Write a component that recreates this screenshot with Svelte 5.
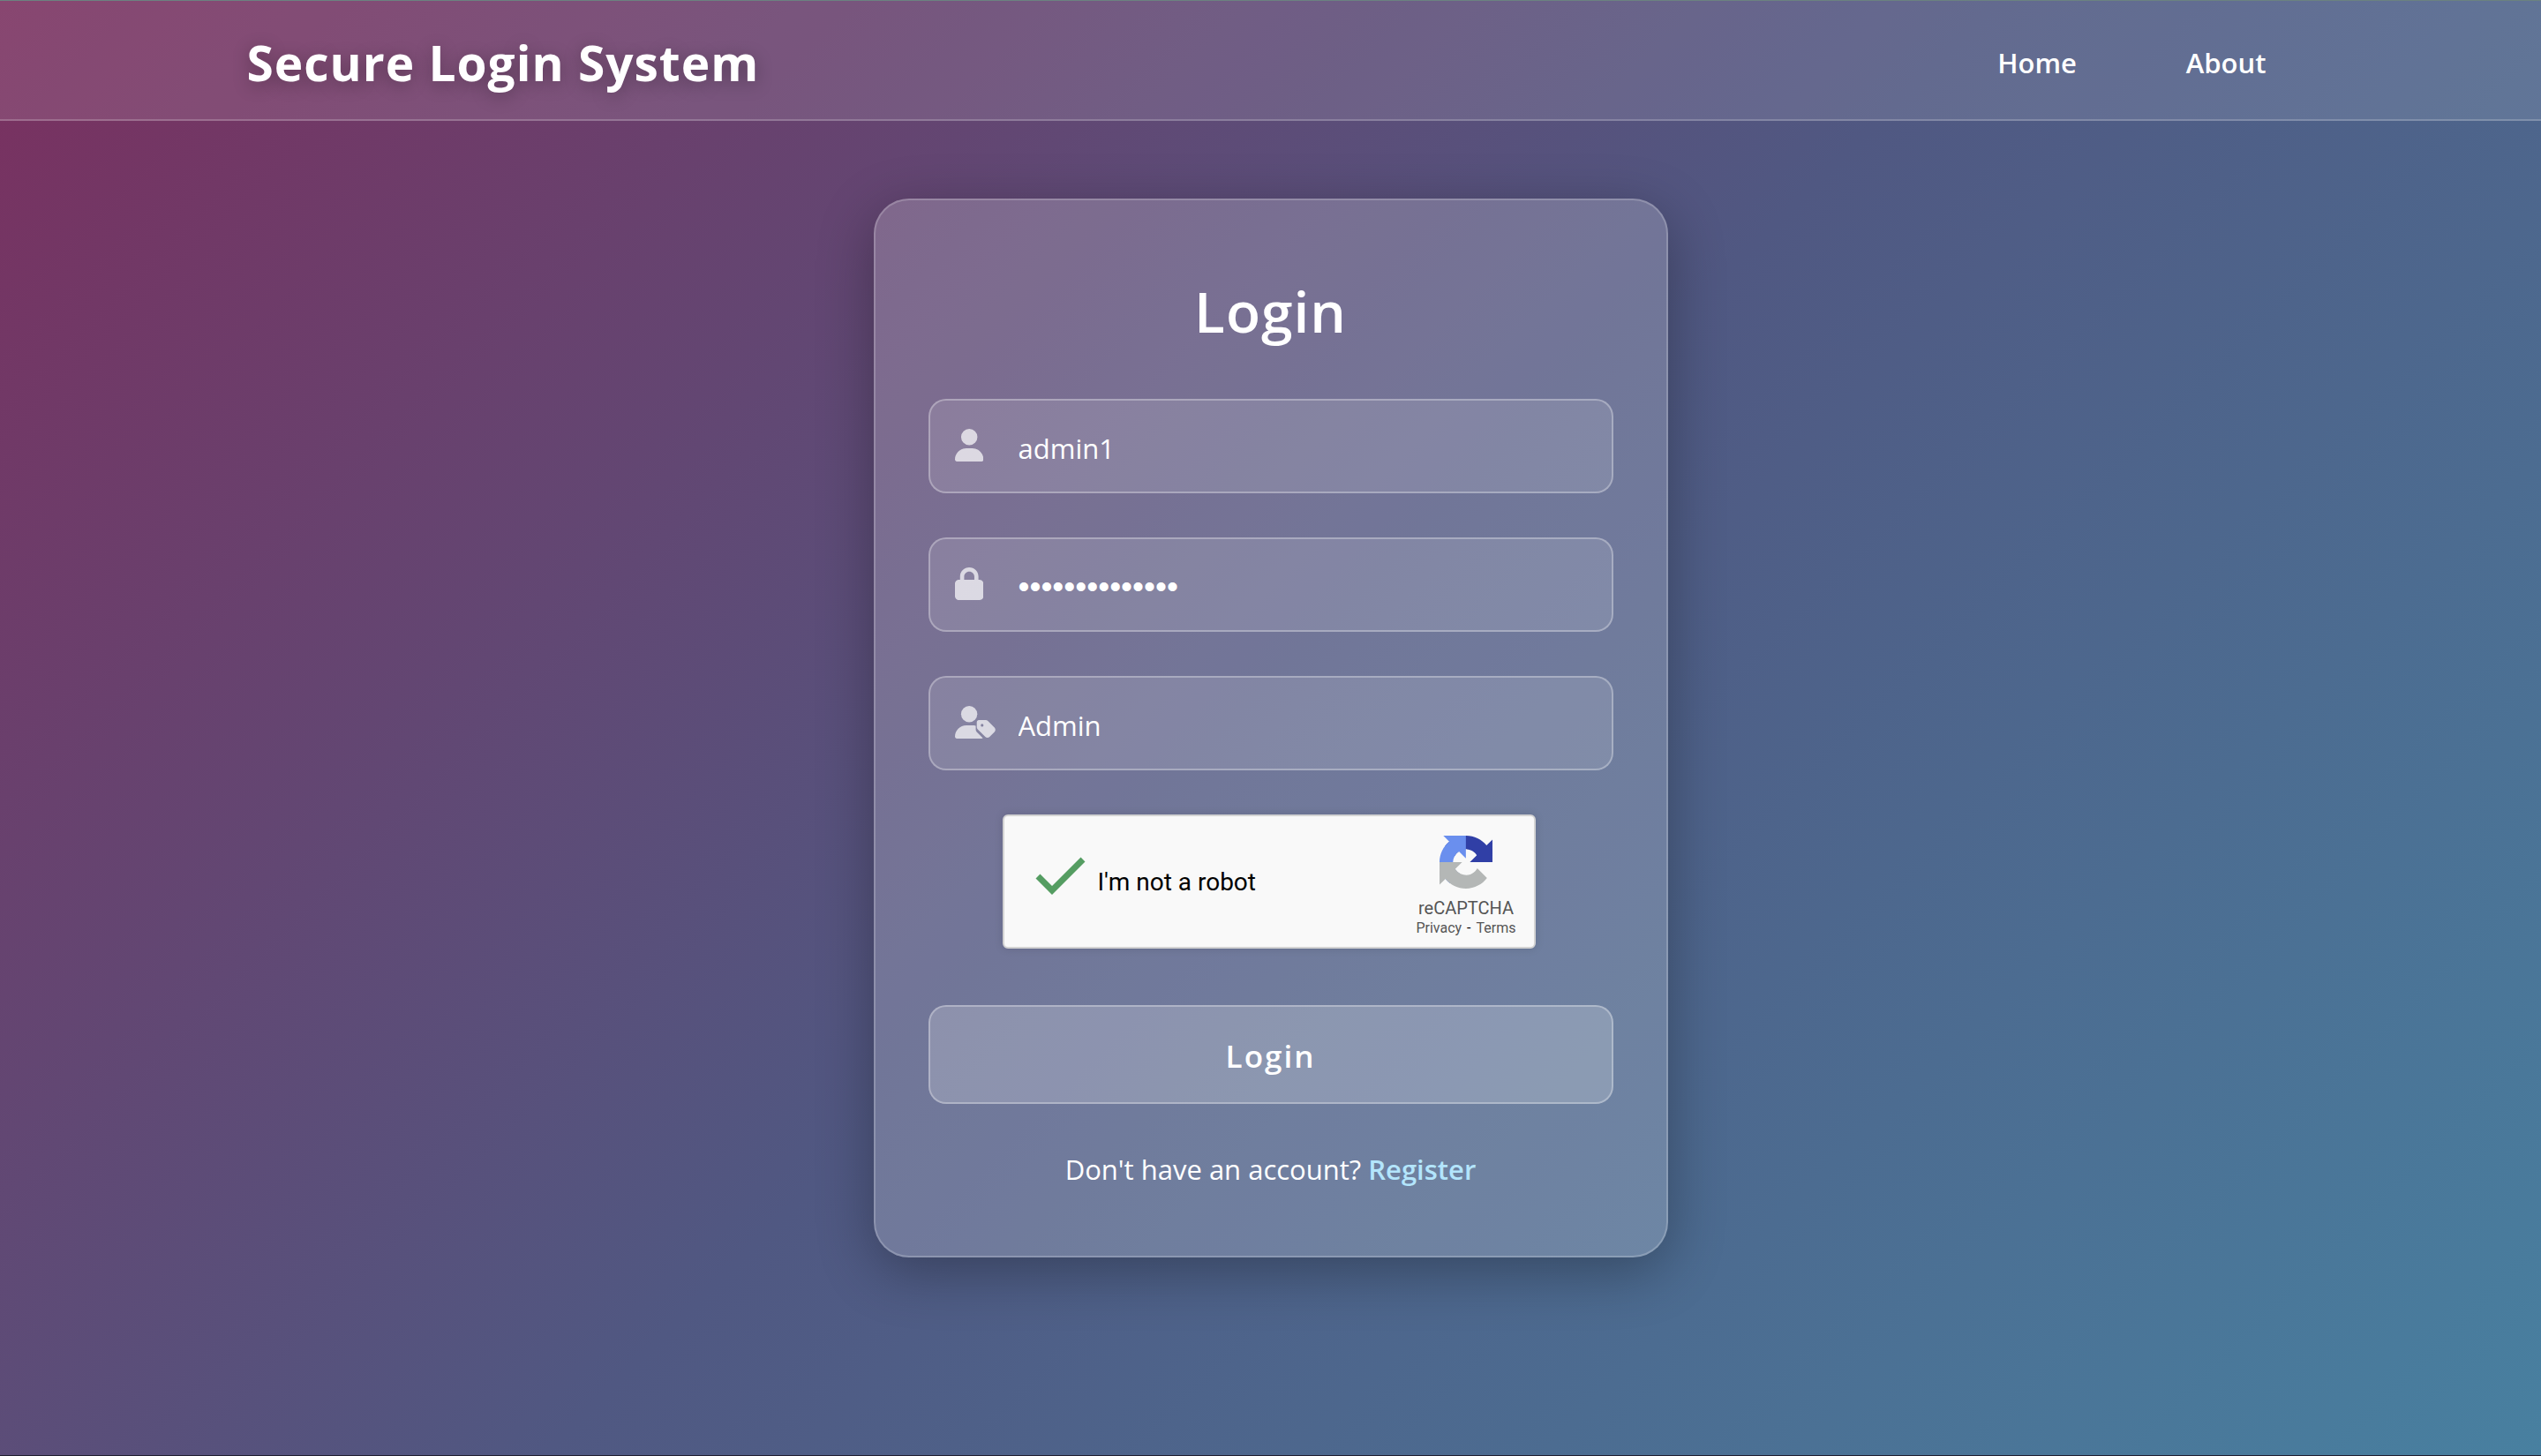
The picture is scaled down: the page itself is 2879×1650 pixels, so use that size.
<script>
  let username = $state('admin1');
  let password = $state('password123456');
  let role = $state('Admin');
  let verified = $state(true);

  const roles = ['Admin', 'User'];
</script>

<div class="page">
  <header class="topbar">
    <div class="bar-inner">
      <h1 class="brand">Secure Login System</h1>
      <nav class="nav" aria-label="Main">
        <a href="#home">Home</a>
        <a href="#about">About</a>
      </nav>
    </div>
  </header>

  <main class="main">
    <form class="card" onsubmit={(e) => e.preventDefault()}>
      <h2 class="title">Login</h2>

      <div class="field">
        <span class="icon">
          <svg viewBox="0 0 448 512" aria-hidden="true">
            <path d="M224 256A128 128 0 1 0 224 0a128 128 0 1 0 0 256zm-45.7 48C79.8 304 0 383.8 0 482.3C0 498.7 13.3 512 29.7 512l388.6 0c16.4 0 29.7-13.3 29.7-29.7C448 383.8 368.2 304 269.7 304l-91.4 0z" />
          </svg>
        </span>
        <input type="text" aria-label="Username" autocomplete="off" spellcheck="false" bind:value={username} />
      </div>

      <div class="field">
        <span class="icon">
          <svg viewBox="0 0 448 512" aria-hidden="true">
            <path d="M144 144l0 48 160 0 0-48c0-44.2-35.8-80-80-80s-80 35.8-80 80zM80 192l0-48C80 64.5 144.5 0 224 0s144 64.5 144 144l0 48 16 0c35.3 0 64 28.7 64 64l0 192c0 35.3-28.7 64-64 64L64 512c-35.3 0-64-28.7-64-64L0 256c0-35.3 28.7-64 64-64l16 0z" />
          </svg>
        </span>
        <input class="secret" type="password" aria-label="Password" autocomplete="off" bind:value={password} />
      </div>

      <div class="field">
        <span class="icon">
          <svg viewBox="0 0 640 512" aria-hidden="true">
            <path d="M224 256A128 128 0 1 0 224 0a128 128 0 1 0 0 256z" />
            <path d="M178.300 304C79.800 304 0 383.800 0 482.300C0 498.700 13.300 512 29.700 512H418c8 0 16-2 22-6L343 409c-10-10-15-23-15-37v-61c-18-5-38-7-58-7z" />
            <path fill-rule="evenodd" d="M376 222h109c13 0 25 5 34 14l104 104c19 19 19 49 0 68l-77 77c-19 19-49 19-68 0L358 366c-9-9-14-20-14-33v-79c0-18 14-32 32-32zM428 282a22 22 0 1 0 0 44a22 22 0 1 0 0-44z" />
          </svg>
        </span>
        <select aria-label="Role" bind:value={role}>
          {#each roles as r}
            <option value={r}>{r}</option>
          {/each}
        </select>
      </div>

      <div class="captcha-frame">
        <div class="captcha">
          <label class="check">
            <span class="tick">
              <input type="checkbox" bind:checked={verified} />
              {#if verified}
                <svg viewBox="0 0 60 44" aria-hidden="true">
                  <path d="M4 23L20 39L55 4" />
                </svg>
              {/if}
            </span>
            <span>I'm not a robot</span>
          </label>
          <div class="badge">
            <svg viewBox="0 0 64 64" aria-hidden="true">
              <path fill="#303fa6" d="M64 31.955l-.033-1.370V4.687l-7.160 7.160C50.948 4.674 42.033.093 32.050.093c-10.400 0-19.622 4.960-25.458 12.640l11.736 11.860a15.550 15.550 0 0 1 4.754-5.334c2.050-1.600 4.952-2.906 8.968-2.906.485 0 .860.057 1.135.163 4.976.393 9.288 3.140 11.828 7.124l-8.307 8.307L64 31.953" />
              <path fill="#6a8fee" d="M31.862.094l-1.370.033H4.594l7.160 7.160C4.580 13.147 0 22.060 0 32.046c0 10.400 4.960 19.622 12.640 25.458L24.500 45.768a15.550 15.550 0 0 1-5.334-4.754c-1.600-2.050-2.906-4.952-2.906-8.968 0-.485.057-.860.163-1.135.393-4.976 3.140-9.288 7.124-11.828l8.307 8.307L31.860.095" />
              <path fill="#b4b7b6" d="M.001 32.045l.033 1.370v25.898l7.160-7.160c5.860 7.173 14.774 11.754 24.760 11.754 10.400 0 19.622-4.960 25.458-12.640l-11.736-11.860a15.550 15.550 0 0 1-4.754 5.334c-2.050 1.600-4.952 2.906-8.968 2.906-.485 0-.860-.057-1.135-.163-4.976-.393-9.288-3.140-11.828-7.124l8.307-8.307L0 32.047" />
            </svg>
            <span class="badge-name">reCAPTCHA</span>
            <span class="badge-links">
              <a href="#privacy">Privacy</a>
              <span class="dash">-</span>
              <a href="#terms">Terms</a>
            </span>
          </div>
        </div>
      </div>

      <button class="submit" type="submit">Login</button>

      <p class="signup">Don't have an account? <a href="#register">Register</a></p>
    </form>
  </main>
</div>

<style>
  .page {
    box-sizing: border-box;
    min-height: 100vh;
    display: flex;
    flex-direction: column;
    border-top: 1px solid #6b8280;
    border-bottom: 1px solid #211f30;
    background: linear-gradient(135deg, #7a305f 0%, #505882 50%, #4880a0 100%);
    color: #fff;
    font-family: 'Segoe UI', 'Open Sans', 'Noto Sans', sans-serif;
    font-size: 31px;
    line-height: 44px;
  }

  .topbar {
    background: rgba(255, 255, 255, 0.11);
    border-bottom: 2px solid rgba(255, 255, 255, 0.2);
  }

  .bar-inner {
    box-sizing: border-box;
    max-width: 2400px;
    margin: 0 auto;
    padding: 32px 40px 26px;
    display: flex;
    align-items: center;
    justify-content: space-between;
  }

  .brand {
    margin: 0;
    font-size: 55px;
    line-height: 76px;
    font-weight: 700;
    letter-spacing: 1px;
    text-shadow: 0 4px 20px rgba(0, 0, 0, 0.3);
  }

  .nav {
    display: flex;
    gap: 60px;
  }

  .nav a {
    padding: 0 32px;
    color: #fff;
    font-weight: 600;
    text-decoration: none;
  }

  .main {
    flex: 1;
    display: flex;
    justify-content: center;
    align-items: flex-start;
    padding: 88px 40px 80px;
  }

  .card {
    box-sizing: border-box;
    width: 100%;
    max-width: 900px;
    padding: 83px 60px 76px;
    border: 2px solid rgba(255, 255, 255, 0.2);
    border-radius: 40px;
    background: rgba(255, 255, 255, 0.19);
    box-shadow: 0 16px 64px rgba(0, 0, 0, 0.3);
    display: flex;
    flex-direction: column;
  }

  .title {
    margin: 0 0 57px;
    font-size: 64px;
    line-height: 85px;
    font-weight: 600;
    letter-spacing: 1px;
    text-align: center;
  }

  .field {
    box-sizing: border-box;
    height: 107px;
    margin-bottom: 50px;
    padding: 0 26px 0 28px;
    display: flex;
    align-items: center;
    gap: 26px;
    border: 2px solid rgba(255, 255, 255, 0.3);
    border-radius: 20px;
    background: rgba(255, 255, 255, 0.12);
  }

  .icon {
    width: 46px;
    flex: none;
    display: flex;
    margin-bottom: 2px;
  }

  .icon svg {
    height: 37px;
    fill: rgba(255, 255, 255, 0.7);
  }

  .field input,
  .field select {
    flex: 1;
    min-width: 0;
    align-self: stretch;
    margin: 0;
    padding: 4px 0 0;
    border: 0;
    outline: 0;
    background: transparent;
    color: #fff;
    font: inherit;
    appearance: none;
  }

  .field .secret {
    font-family: 'Liberation Sans', sans-serif;
    font-size: 37px;
  }

  .field option {
    color: #222;
  }

  .captcha-frame {
    width: 608px;
    max-width: 100%;
    align-self: center;
    margin-bottom: 64px;
  }

  .captcha {
    box-sizing: border-box;
    max-width: 604px;
    height: 152px;
    padding: 0 20px 0 34px;
    display: flex;
    align-items: center;
    justify-content: space-between;
    border: 2px solid #d3d3d3;
    border-radius: 6px;
    background: #f9f9f9;
    box-shadow: 0 0 8px 2px rgba(0, 0, 0, 0.08);
    color: #000;
    font-family: Roboto, sans-serif;
  }

  .check {
    display: flex;
    align-items: center;
    gap: 12px;
    padding-top: 2px;
    font-size: 28px;
    line-height: 34px;
  }

  .tick {
    width: 60px;
    height: 44px;
    display: grid;
    margin-bottom: 16px;
  }

  .tick input,
  .tick svg {
    grid-area: 1 / 1;
    width: 100%;
    height: 100%;
    margin: 0;
  }

  .tick input {
    appearance: none;
    outline: 0;
  }

  .tick svg {
    fill: none;
    stroke: #559d62;
    stroke-width: 7;
    pointer-events: none;
  }

  .badge {
    display: flex;
    flex-direction: column;
    align-items: center;
    padding-top: 12px;
    color: #555;
  }

  .badge svg {
    width: 60px;
    height: 60px;
  }

  .badge-name {
    margin-top: 10px;
    font-size: 20px;
    line-height: 24px;
  }

  .badge-links {
    display: flex;
    gap: 6px;
    font-size: 16px;
    line-height: 22px;
  }

  .badge-links a {
    color: #555;
    text-decoration: none;
  }

  .dash {
    color: #000;
  }

  .submit {
    height: 112px;
    padding: 4px 0 0;
    border: 2px solid rgba(255, 255, 255, 0.3);
    border-radius: 20px;
    background: rgba(255, 255, 255, 0.2);
    color: #fff;
    font: inherit;
    font-size: 35px;
    font-weight: 600;
    letter-spacing: 2px;
    cursor: pointer;
  }

  .signup {
    margin: 52px 0 0;
    text-align: center;
  }

  .signup a {
    color: #b3e5fc;
    font-weight: 600;
    text-decoration: none;
  }
</style>
